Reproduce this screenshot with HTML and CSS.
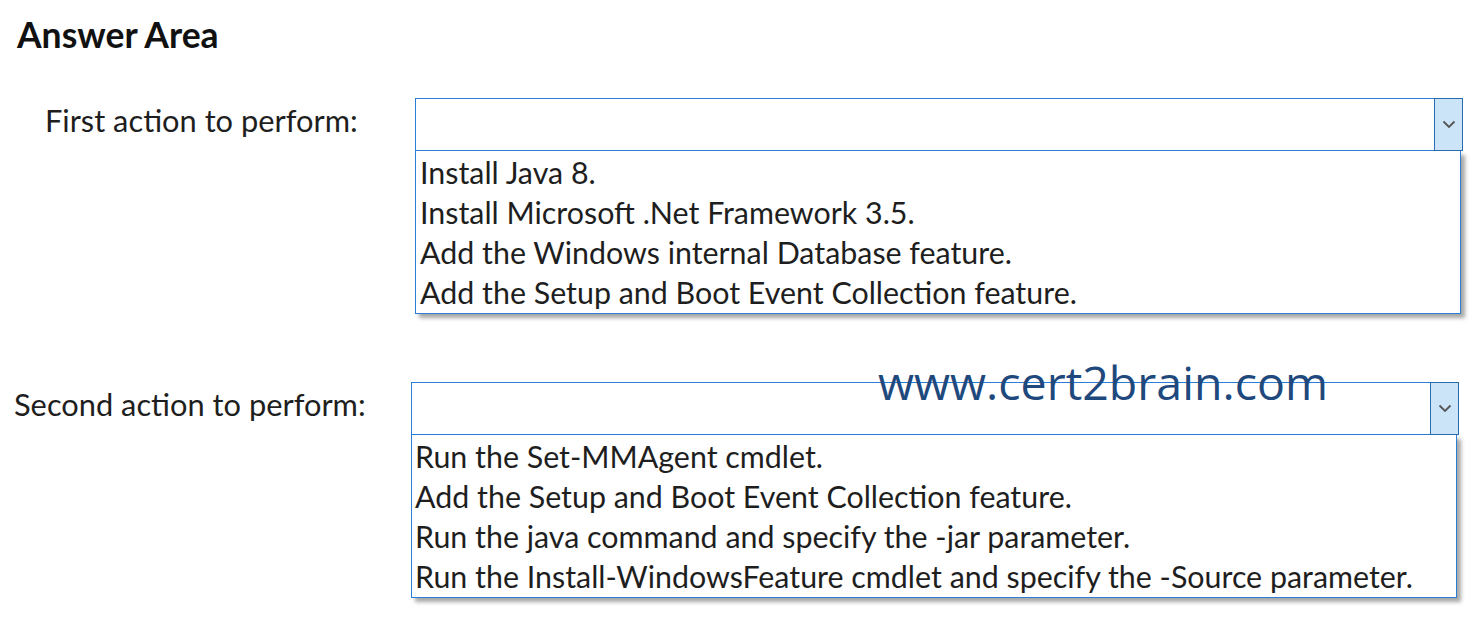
FILE: index.html
```html
<!DOCTYPE html>
<html lang="en">
<head>
  <meta charset="UTF-8">
  <title>Answer Area</title>
  <link rel="stylesheet" href="styles.css">
</head>
<body>
  <div class="page">
    <h1>Answer Area</h1>

    <div class="row row-first">
      <div class="label">First action to perform:</div>
      <div class="dropdown">
        <div class="select">
          <div class="value"></div>
          <div class="arrow">
            <svg width="14" height="9" viewBox="0 0 14 9"><path d="M1.5 1.5 L7 7 L12.5 1.5" fill="none" stroke="#555" stroke-width="1.8"/></svg>
          </div>
        </div>
        <ul class="options">
          <li>Install Java 8.</li>
          <li>Install Microsoft .Net Framework 3.5.</li>
          <li>Add the Windows internal Database feature.</li>
          <li>Add the Setup and Boot Event Collection feature.</li>
        </ul>
      </div>
    </div>

    <div class="row row-second">
      <div class="label">Second action to perform:</div>
      <div class="dropdown">
        <div class="select">
          <div class="value"></div>
          <div class="arrow">
            <svg width="14" height="9" viewBox="0 0 14 9"><path d="M1.5 1.5 L7 7 L12.5 1.5" fill="none" stroke="#555" stroke-width="1.8"/></svg>
          </div>
        </div>
        <ul class="options">
          <li>Run the Set-MMAgent cmdlet.</li>
          <li>Add the Setup and Boot Event Collection feature.</li>
          <li>Run the java command and specify the -jar parameter.</li>
          <li>Run the Install-WindowsFeature cmdlet and specify the -Source parameter.</li>
        </ul>
      </div>
    </div>

    <div class="watermark">www.cert2brain.com</div>
  </div>
</body>
</html>
```

FILE: styles.css
```css
body {
  margin: 0;
  background: #fff;
  font-family: 'Lato', 'Open Sans', sans-serif;
  color: #1e1e1e;
}

.page {
  position: relative;
  width: 1480px;
  height: 619px;
}

h1 {
  margin: 0;
  padding: 16px 0 0 17px;
  font-size: 35.5px;
  font-weight: bold;
  line-height: 38px;
  color: #111;
}

.row {
  display: flex;
  align-items: flex-start;
}

.row-first {
  margin-top: 44px;
  padding-left: 45px;
}

.row-second {
  margin-top: 68px;
  padding-left: 14px;
}

.label {
  font-size: 30.8px;
  line-height: 40px;
  padding-top: 3px;
}

.row-first .label {
  width: 370px;
}

.row-second .label {
  width: 397px;
}

.dropdown {
  width: 1048px;
}

.select {
  display: flex;
  height: 51px;
  border: 1px solid #2a7fd4;
  background: #fff;
}

.value {
  flex: 1;
}

.arrow {
  width: 27px;
  display: flex;
  align-items: center;
  justify-content: center;
  background: #cce4f7;
  border: 1px solid #2a6bb0;
  margin: -1px -1px -1px 0;
}

.options {
  list-style: none;
  margin: 0;
  padding: 1px 0;
  width: 1044px;
  border: 1px solid #2a7fd4;
  border-top: none;
  box-shadow: 4px 4px 4px rgba(0, 0, 0, 0.35);
  background: #fff;
}

.options li {
  font-size: 30.4px;
  line-height: 40px;
  padding-left: 4px;
  white-space: nowrap;
}

.row-second .options li {
  padding-left: 3px;
}

.watermark {
  position: absolute;
  left: 878px;
  top: 354px;
  font-family: 'Open Sans', sans-serif;
  font-size: 46.5px;
  line-height: 56px;
  color: #1f497d;
}
```
